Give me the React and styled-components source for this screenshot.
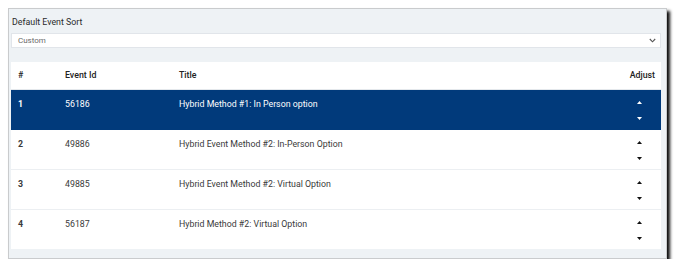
import React from "react";
import styled, { createGlobalStyle } from "styled-components";

const Global = createGlobalStyle`
  html, body { margin: 0; padding: 0; background: #ffffff; }
  body { font-family: Roboto, "Liberation Sans", Arial, sans-serif; }
  * { box-sizing: border-box; }
`;

const Frame = styled.div`
  margin: 8px 0 0 8px;
  width: 659px;
  height: 251px;
  border: 1px solid #c9cbcd;
  background: #eef2f5;
  box-shadow: 3px 3px 3px rgba(0, 0, 0, 0.95);
  padding: 6px 5px 0 1px;
  display: flex;
  flex-direction: column;
`;

const Label = styled.div`
  font-size: 8.8px;
  line-height: 14px;
  color: #2b2b2b;
  padding-left: 2px;
  margin-bottom: 4px;
`;

const SelectBox = styled.div`
  margin-left: 1px;
  height: 15px;
  background: #ffffff;
  border: 1px solid #e1e5ea;
  display: flex;
  align-items: center;
  justify-content: space-between;
  padding: 0 4px 0 6px;
  font-size: 8px;
  color: #6a6a6a;
`;

const Table = styled.table`
  margin: 14px 0 0 1px;
  width: calc(100% - 1px);
  border-collapse: collapse;
  background: #ffffff;
  table-layout: fixed;
`;

const HeadCell = styled.th`
  height: 27px;
  padding: 0 ${(p) => (p.$right ? "6px" : "0")} 0 ${(p) => (p.$right ? "0" : "7px")};
  text-align: ${(p) => (p.$right ? "right" : "left")};
  font-size: 8.8px;
  font-weight: 500;
  color: #222;
  vertical-align: middle;
  border-bottom: 1px solid #e4e8ec;
`;

const Row = styled.tr`
  background: ${(p) => (p.$active ? "#013a7b" : "#ffffff")};
  color: ${(p) => (p.$active ? "#ffffff" : "#3a3a3a")};
  border-bottom: 1px solid ${(p) => (p.$active ? "#013a7b" : "#eceff2")};
  &:last-child { border-bottom: none; }
`;

const Cell = styled.td`
  height: 40px;
  padding: 8px 0 0 7px;
  vertical-align: top;
  font-size: 8.8px;
  line-height: 12px;
  font-weight: ${(p) => (p.$bold ? 700 : 400)};
`;

const AdjustCell = styled.td`
  height: 40px;
  padding: 0 19px 0 0;
  vertical-align: top;
`;

const Arrows = styled.div`
  display: flex;
  flex-direction: column;
  align-items: flex-end;
  gap: 13px;
  padding-top: 11px;
`;

const Arrow = ({ down, color }) => (
  <svg width="5" height="3" viewBox="0 0 5 3" style={{ display: "block" }}>
    <polygon
      points={down ? "0,0 5,0 2.5,3" : "2.5,0 5,3 0,3"}
      fill={color}
    />
  </svg>
);

const rows = [
  { n: 1, id: "56186", title: "Hybrid Method #1: In Person option", active: true },
  { n: 2, id: "49886", title: "Hybrid Event Method #2: In-Person Option" },
  { n: 3, id: "49885", title: "Hybrid Event Method #2: Virtual Option" },
  { n: 4, id: "56187", title: "Hybrid Method #2: Virtual Option" },
];

export default function App() {
  return (
    <>
      <Global />
      <Frame>
        <Label>Default Event Sort</Label>
        <SelectBox>
          <span>Custom</span>
          <svg width="7" height="5" viewBox="0 0 7 5">
            <polyline points="0.8,1 3.5,3.8 6.2,1" fill="none" stroke="#555" strokeWidth="1.1" />
          </svg>
        </SelectBox>
        <Table>
          <colgroup>
            <col style={{ width: "47px" }} />
            <col style={{ width: "114px" }} />
            <col />
            <col style={{ width: "60px" }} />
          </colgroup>
          <thead>
            <tr>
              <HeadCell>#</HeadCell>
              <HeadCell>Event Id</HeadCell>
              <HeadCell>Title</HeadCell>
              <HeadCell $right>Adjust</HeadCell>
            </tr>
          </thead>
          <tbody>
            {rows.map((r) => (
              <Row key={r.n} $active={r.active}>
                <Cell $bold>{r.n}</Cell>
                <Cell>{r.id}</Cell>
                <Cell>{r.title}</Cell>
                <AdjustCell>
                  <Arrows>
                    <Arrow color={r.active ? "#ffffff" : "#111"} />
                    <Arrow down color={r.active ? "#ffffff" : "#111"} />
                  </Arrows>
                </AdjustCell>
              </Row>
            ))}
          </tbody>
        </Table>
      </Frame>
    </>
  );
}
